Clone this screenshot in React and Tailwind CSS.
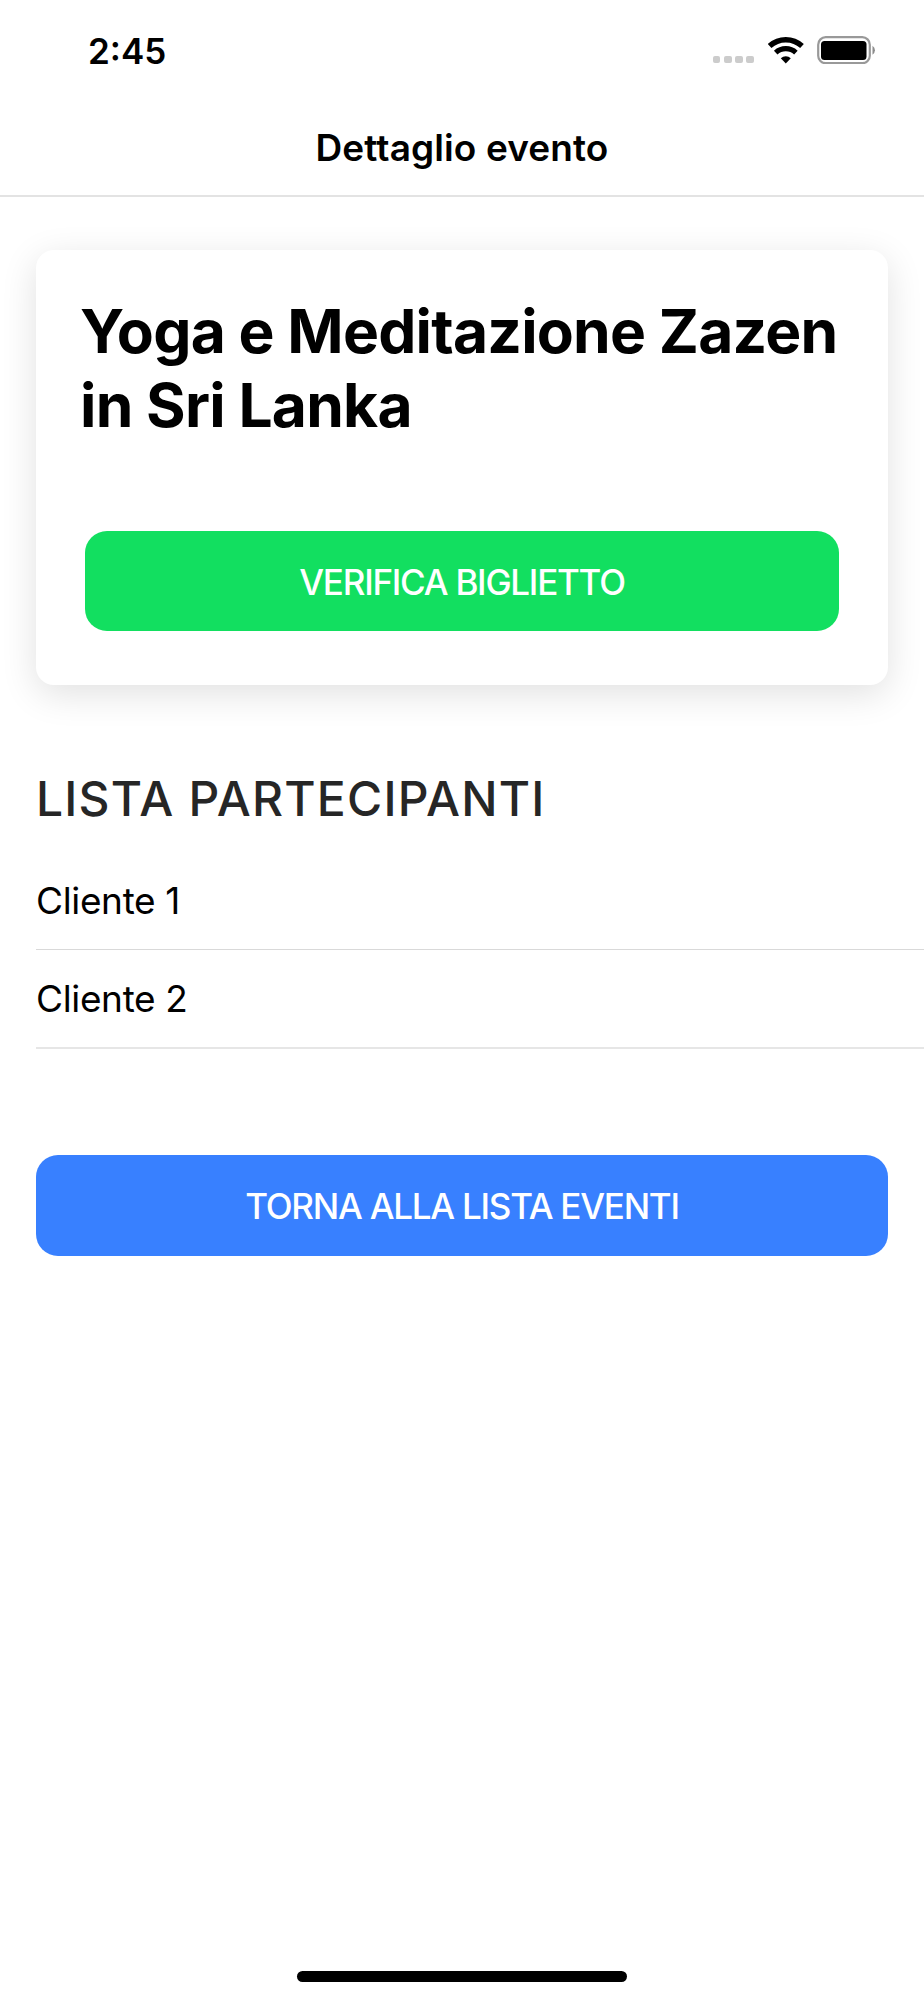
import React from 'react';

const participants = ['Cliente 1', 'Cliente 2'];

const WifiIcon = () => (
  <svg width="36" height="28" viewBox="0 0 36 28" fill="none" stroke="#000">
    <path d="M1.6 10 A24 24 0 0 1 34 10" strokeWidth="5.4" />
    <path d="M7.7 16.6 A15 15 0 0 1 27.9 16.6" strokeWidth="5.2" />
    <path d="M17.8 27.4 L12.8 22.2 A7.6 7.6 0 0 1 22.8 22.2 Z" fill="#000" stroke="none" />
  </svg>
);

const BatteryIcon = () => (
  <svg width="60" height="28" viewBox="0 0 60 28">
    <rect x="1.2" y="1.2" width="51.6" height="26" rx="7.5" fill="none" stroke="#999" strokeWidth="2.2" />
    <rect x="4" y="5" width="45.5" height="19" rx="3.5" fill="#000" />
    <path d="M55.5 9.8 A5.4 5.4 0 0 1 55.5 18.8 Z" fill="#8c8c8c" />
  </svg>
);

const StatusBar = () => (
  <div className="flex h-[100px] items-start justify-between pl-[88px] pr-[47px] pt-[30px]">
    <span className="text-[35px] font-semibold leading-[42px]">2:45</span>
    <div className="mt-[6px] flex h-7 items-center">
      <div className="mr-[14px] mt-[19px] flex gap-[3.5px]">
        {[0, 1, 2, 3].map((dot) => (
          <span key={dot} className="h-[7.7px] w-[7.7px] rounded-[2px] bg-[#cccccc]" />
        ))}
      </div>
      <WifiIcon />
      <div className="ml-[13px]">
        <BatteryIcon />
      </div>
    </div>
  </div>
);

const App = () => {
  return (
    <div className="flex h-[2000px] w-[924px] flex-col bg-white font-['Inter',sans-serif] text-black">
      <StatusBar />

      {/* Page title */}
      <header className="flex h-[97px] justify-center border-b-2 border-[#e3e3e3] pt-[26px]">
        <h2 className="text-[37px] font-semibold leading-[44px] tracking-[0.1px]">Dettaglio evento</h2>
      </header>

      <main className="flex flex-1 flex-col pl-9 pt-[53px]">
        {/* Event card */}
        <section className="mr-9 h-[434.5px] rounded-[18px] bg-white pl-[44px] pt-[44px] shadow-[0_9px_36px_rgba(0,0,0,0.12)]">
          <h1 className="h-[237px] whitespace-nowrap text-[60.5px] font-bold leading-[74px] tracking-[-0.77px]">
            Yoga e Meditazione Zazen
            <br />
            in Sri Lanka
          </h1>
          <button className="ml-[5px] flex h-[100px] w-[754px] items-center justify-center rounded-[22px] bg-[#12df60] pt-[2px] text-[35px] font-[450] tracking-[-1.25px] text-white">
            VERIFICA BIGLIETTO
          </button>
        </section>

        {/* Participants */}
        <h3 className="mt-[84.5px] whitespace-nowrap text-[48px] font-medium leading-[60px] tracking-[1.2px] text-[#262626]">
          LISTA PARTECIPANTI
        </h3>
        <ul className="mt-[24px]">
          {participants.map((name) => (
            <li
              key={name}
              className="h-[98px] border-b-2 border-[#e6e6e6] pt-[26px] text-[37px] leading-[44px] tracking-[-0.35px] first:mb-px first:h-[97px] first:border-b first:border-[#d9d9d9]"
            >
              {name}
            </li>
          ))}
        </ul>

        <button className="mr-9 mt-[106px] flex h-[101px] shrink-0 items-center justify-center rounded-[22px] bg-[#3880ff] pt-[2px] text-[35px] font-[450] tracking-[-1.25px] text-white">
          TORNA ALLA LISTA EVENTI
        </button>
      </main>

      {/* Home indicator */}
      <div className="mb-[18px] ml-[297px] h-[11px] w-[330px] rounded-full bg-black" />
    </div>
  );
};

export default App;
